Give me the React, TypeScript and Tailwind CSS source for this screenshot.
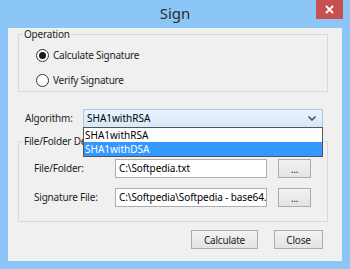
import React from 'react';

const font = { fontFamily: '"Noto Sans", "Open Sans", sans-serif' };

const Radio: React.FC<{ checked?: boolean; label: string }> = ({ checked, label }) => (
  <label className="flex items-center h-[14px] ml-[17px]">
    <span className="w-[13px] h-[13px] rounded-full border border-[#333] bg-white flex items-center justify-center">
      {checked && <span className="w-[7px] h-[7px] rounded-full bg-[#1a1a1a]" />}
    </span>
    <span className="ml-[4px] text-[10px] text-[#1e1e1e] tracking-[-0.25px]">{label}</span>
  </label>
);

const WinButton: React.FC<{ label: string; w: string }> = ({ label, w }) => (
  <button
    className={`${w} h-[19px] border border-[#acacac] bg-gradient-to-b from-[#f2f2f2] to-[#e3e3e3] text-[10px] text-[#1e1e1e] leading-none flex items-center justify-center tracking-[-0.2px]`}
  >
    {label}
  </button>
);

const FileRow: React.FC<{ label: string; value: string; top: string }> = ({ label, value, top }) => (
  <div className={`flex items-center ${top}`}>
    <span className="w-[96px] pl-[15px] text-[10px] text-[#1e1e1e] whitespace-nowrap tracking-[-0.2px]">{label}</span>
    <div className="w-[152px] h-[19px] border border-[#abadb3] bg-white flex items-center px-[3px] overflow-hidden text-[10px] text-black whitespace-nowrap tracking-[-0.1px]">
      {value}
    </div>
    <div className="ml-[11px]">
      <WinButton label="..." w="w-[33px]" />
    </div>
  </div>
);

export default function App() {
  return (
    <div className="w-[350px] h-[269px] bg-[#8cc6f7] flex flex-col" style={font}>
      {/* title bar */}
      <div className="relative h-[28px] flex items-center justify-center">
        <span className="text-[15px] text-[#2b2b2b] -mt-[1px]">Sign</span>
        <div className="absolute top-0 right-[7px] w-[27px] h-[19px] bg-[#c75050] flex items-center justify-center">
          <svg width="9" height="9" viewBox="0 0 9 9">
            <path d="M1 1 L8 8 M8 1 L1 8" stroke="white" strokeWidth="1.8" />
          </svg>
        </div>
      </div>

      {/* client area */}
      <div className="mx-[8px] h-[233px] bg-[#f0f0f0] flex flex-col relative">
        <fieldset className="ml-[10px] w-[310px] h-[64px] border border-[#d9d9d9] px-0 pb-0 pt-0 m-0 min-w-0">
          <legend className="ml-[4px] px-[1px] text-[10px] leading-[12px] text-[#1e1e1e] tracking-[-0.2px]">Operation</legend>
          <div className="flex flex-col mt-[8px] gap-[11px]">
            <Radio checked label="Calculate Signature" />
            <Radio label="Verify Signature" />
          </div>
        </fieldset>

        {/* algorithm */}
        <div className="flex items-center mt-[17px]">
          <span className="w-[75px] pl-[17px] text-[10px] text-[#1e1e1e] tracking-[-0.2px]">Algorithm:</span>
          <div className="w-[240px] h-[19px] border border-[#a9c7e6] bg-gradient-to-b from-[#eaf3fc] to-[#d6e8f9] flex items-center justify-between pl-[3px] pr-[6px]">
            <span className="text-[10px] text-black">SHA1withRSA</span>
            <svg width="8" height="5" viewBox="0 0 8 5">
              <path d="M0.5 0.5 L4 4 L7.5 0.5" stroke="#444" strokeWidth="1.5" fill="none" />
            </svg>
          </div>
        </div>

        <fieldset className="ml-[10px] mt-[7px] w-[310px] h-[87px] border border-[#d9d9d9] px-0 pb-0 pt-0 m-0 min-w-0">
          <legend className="ml-[4px] px-[1px] text-[10px] leading-[12px] text-[#1e1e1e] tracking-[-0.2px]">File/Folder Details</legend>
          <FileRow label="File/Folder:" value="C:\Softpedia.txt" top="mt-[12px]" />
          <FileRow label="Signature File:" value="C:\Softpedia\Softpedia - base64.txt" top="mt-[10px]" />
        </fieldset>

        <div className="flex justify-end gap-[16px] pr-[19px] mt-[8px]">
          <WinButton label="Calculate" w="w-[67px]" />
          <WinButton label="Close" w="w-[49px]" />
        </div>

        {/* open dropdown list */}
        <div className="absolute left-[75px] top-[99px] w-[240px] border border-[#555] bg-white flex flex-col text-[10px]">
          <div className="h-[14px] flex items-center pl-[1px] text-black">SHA1withRSA</div>
          <div className="h-[14px] flex items-center pl-[1px] bg-[#3399ff] text-white">SHA1withDSA</div>
        </div>
      </div>
    </div>
  );
}
